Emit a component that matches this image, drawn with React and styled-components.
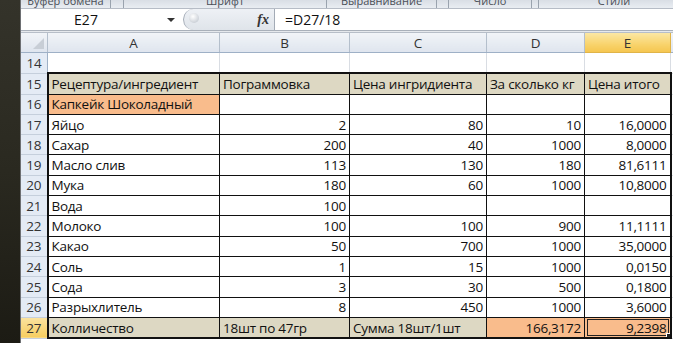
import React from 'react';
import styled, { createGlobalStyle, css } from 'styled-components';

const GlobalStyle = createGlobalStyle`
    html, body {
        margin: 0;
        padding: 0;
        width: 673px;
        height: 343px;
        overflow: hidden;
        background: #23221a;
    }
`;

const Screen = styled.div`
    width: 673px;
    height: 343px;
    display: flex;
    overflow: hidden;
    font-family: "Open Sans", "Noto Sans", sans-serif;
`;

const DarkEdge = styled.div`
    width: 20px;
    flex-shrink: 0;
    background: linear-gradient(180deg, #34332a 0%, #2a2920 50%, #1c1b14 100%);
    border-right: 1px solid #6d6f72;
`;

const Window = styled.div`
    flex: 1;
    display: flex;
    flex-direction: column;
    background: #fff;
    min-width: 0;
`;

const RibbonStrip = styled.div`
    height: 8px;
    display: flex;
    overflow: hidden;
    background: linear-gradient(180deg, #d9dee5, #e9edf2);
    border-bottom: 1px solid #b6bcc6;
`;

const RibbonGroup = styled.div`
    width: ${p => p.$w}px;
    flex-shrink: 0;
    border-right: 1px solid #9aa3ae;
    font-size: 11px;
    line-height: 11px;
    color: #4a4f57;
    text-align: center;
    margin-top: -5px;
    white-space: nowrap;
    overflow: hidden;
`;

const FormulaBar = styled.div`
    height: 21px;
    display: flex;
    align-items: stretch;
    background: #fff;
    border-bottom: 1px solid #a9b0ba;
`;

const NameBox = styled.div`
    width: 162px;
    display: flex;
    align-items: center;
    font-size: 14px;
    color: #111;
`;

const NameText = styled.span`
    flex: 1;
    text-align: center;
    padding-right: 16px;
`;

const DropArrow = styled.span`
    width: 0;
    height: 0;
    margin-right: 8px;
    border-left: 4px solid transparent;
    border-right: 4px solid transparent;
    border-top: 4px solid #333;
`;

const FxZone = styled.div`
    width: 80px;
    display: flex;
    align-items: center;
    justify-content: space-between;
    background: linear-gradient(180deg, #eef1f5, #dfe4ea);
    border-left: 1px solid #a3abb6;
    border-right: 1px solid #a3abb6;
    border-radius: 11px 0 0 11px;
    padding: 0 5px;
`;

const Grip = styled.span`
    width: 10px;
    height: 10px;
    border-radius: 50%;
    background: radial-gradient(circle at 40% 35%, #ffffff, #b9c0c9);
    margin-top: -4px;
`;

const FxLabel = styled.span`
    font-family: "Liberation Serif", serif;
    font-style: italic;
    font-weight: bold;
    font-size: 14px;
    color: #333;
`;

const FormulaText = styled.div`
    flex: 1;
    display: flex;
    align-items: center;
    padding-left: 10px;
    font-size: 14px;
    color: #111;
`;

const BarGap = styled.div`
    height: 1px;
    background: #e6e9ed;
    border-bottom: 1px solid #b7bec8;
`;

const Sheet = styled.table`
    border-collapse: collapse;
    table-layout: fixed;
    width: 680px;
    font-size: 13.5px;
    letter-spacing: -0.25px;
    color: #111;
`;

const Corner = styled.th`
    width: 26px;
    height: 19px;
    padding: 0;
    position: relative;
    background: linear-gradient(180deg, #f1f4f8, #dfe5ee);
    border-right: 1px solid #b4bfcc;
    border-bottom: 1px solid #9eb0c6;
    &::after {
        content: '';
        position: absolute;
        right: 3px;
        bottom: 3px;
        border-left: 11px solid transparent;
        border-bottom: 11px solid #c8ced6;
    }
`;

const ColHead = styled.th`
    width: ${p => p.$w}px;
    height: 19px;
    padding: 0;
    font-weight: normal;
    font-size: 13.5px;
    color: #333;
    text-align: center;
    border-right: 1px solid #b4bfcc;
    border-bottom: 1px solid #9eb0c6;
    background: ${p => p.$active
        ? 'linear-gradient(180deg, #fbe7a4 0%, #f8d36c 60%, #f5c650 100%)'
        : 'linear-gradient(180deg, #f1f4f8, #dfe5ee)'};
    ${p => p.$active && css`
        border-left: 1px solid #e0b448;
        border-right: 1px solid #e0b448;
        border-bottom: 1px solid #e0b448;
    `}
`;

const RowHead = styled.th`
    height: 19.3px;
    padding: 0;
    font-weight: normal;
    font-size: 13.5px;
    color: #333;
    text-align: center;
    border-right: 1px solid #9eb0c6;
    border-bottom: 1px solid #c5cfdc;
    background: ${p => p.$active
        ? 'linear-gradient(180deg, #fbe3a0, #f6cd5f)'
        : '#e4ebf5'};
`;

const Cell = styled.td`
    padding: 0 3px;
    height: 19.3px;
    white-space: nowrap;
    overflow: hidden;
    text-align: ${p => (p.$num ? 'right' : 'left')};
    background: ${p => p.$bg || '#fff'};
    border: ${p => (p.$table ? '1px solid #111' : '1px solid #d9dde3')};
    ${p => p.$top && css`border-top: 2.5px solid #111;`}
    ${p => p.$bottom && css`border-bottom: 2.5px solid #111;`}
    ${p => p.$left && css`border-left: 2.5px solid #111;`}
    ${p => p.$right && css`border-right: 2.5px solid #111;`}
    ${p => p.$selected && css`
        position: relative;
        outline: 1.5px solid #222;
        outline-offset: -3px;
        &::after {
            content: '';
            position: absolute;
            right: -3px;
            bottom: -3px;
            width: 5px;
            height: 5px;
            background: #222;
            border: 1px solid #fff;
        }
    `}
`;

const BEIGE = '#ddd8c3';
const ORANGE = '#f9bc8c';

const columns = [
    { key: 'A', w: 171 },
    { key: 'B', w: 129 },
    { key: 'C', w: 136 },
    { key: 'D', w: 97 },
    { key: 'E', w: 85 },
    { key: 'F', w: 30 },
];

const rows = [
    { n: 15, bg: BEIGE, cells: ['Рецептура/ингредиент', 'Пограммовка', 'Цена ингридиента', 'За сколько кг', 'Цена итого'], text: true },
    { n: 16, cells: ['Капкейк Шоколадный', '', '', '', ''], firstBg: ORANGE },
    { n: 17, cells: ['Яйцо', '2', '80', '10', '16,0000'] },
    { n: 18, cells: ['Сахар', '200', '40', '1000', '8,0000'] },
    { n: 19, cells: ['Масло слив', '113', '130', '180', '81,6111'] },
    { n: 20, cells: ['Мука', '180', '60', '1000', '10,8000'] },
    { n: 21, cells: ['Вода', '100', '', '', ''] },
    { n: 22, cells: ['Молоко', '100', '100', '900', '11,1111'] },
    { n: 23, cells: ['Какао', '50', '700', '1000', '35,0000'] },
    { n: 24, cells: ['Соль', '1', '15', '1000', '0,0150'] },
    { n: 25, cells: ['Сода', '3', '30', '500', '0,1800'] },
    { n: 26, cells: ['Разрыхлитель', '8', '450', '1000', '3,6000'] },
    { n: 27, bg: BEIGE, cells: ['Колличество', '18шт по 47гр', 'Сумма 18шт/1шт', '166,3172', '9,2398'], total: true },
];

const ribbon = [
    { w: 89, label: 'Буфер обмена' },
    { w: 12, label: '' },
    { w: 202, label: 'Шрифт' },
    { w: 109, label: 'Выравнивание' },
    { w: 11, label: '' },
    { w: 82, label: 'Число' },
    { w: 6, label: '' },
    { w: 150, label: 'Стили' },
];

const cellProps = (row, i) => {
    const props = { $table: true, $top: row.n === 15, $bottom: row.n === 27, $left: i === 0, $right: i === 4 };
    if (row.bg) props.$bg = row.bg;
    if (i === 0 && row.firstBg) props.$bg = row.firstBg;
    if (row.total && i >= 3) props.$bg = ORANGE;
    if (row.total && i === 4) props.$selected = true;
    const isText = row.text || i === 0 || (row.total && i < 3);
    props.$num = !isText;
    return props;
};

const App = () => {
    return (
        <>
            <GlobalStyle />
            <Screen>
                <DarkEdge />
                <Window>
                    <RibbonStrip>
                        {ribbon.map((g, i) => (
                            <RibbonGroup key={i} $w={g.w}>{g.label}</RibbonGroup>
                        ))}
                    </RibbonStrip>
                    <FormulaBar>
                        <NameBox>
                            <NameText>E27</NameText>
                            <DropArrow />
                        </NameBox>
                        <FxZone>
                            <Grip />
                            <FxLabel>fx</FxLabel>
                        </FxZone>
                        <FormulaText>=D27/18</FormulaText>
                    </FormulaBar>
                    <BarGap />
                    <Sheet>
                        <thead>
                            <tr>
                                <Corner />
                                {columns.map(c => (
                                    <ColHead key={c.key} $w={c.w} $active={c.key === 'E'}>{c.key}</ColHead>
                                ))}
                            </tr>
                        </thead>
                        <tbody>
                            <tr>
                                <RowHead>14</RowHead>
                                {columns.map(c => <Cell key={c.key} />)}
                            </tr>
                            {rows.map(row => (
                                <tr key={row.n}>
                                    <RowHead $active={row.n === 27}>{row.n}</RowHead>
                                    {row.cells.map((v, i) => (
                                        <Cell key={i} {...cellProps(row, i)}>{v}</Cell>
                                    ))}
                                    <Cell />
                                </tr>
                            ))}
                        </tbody>
                    </Sheet>
                </Window>
            </Screen>
        </>
    );
};

export default App;
